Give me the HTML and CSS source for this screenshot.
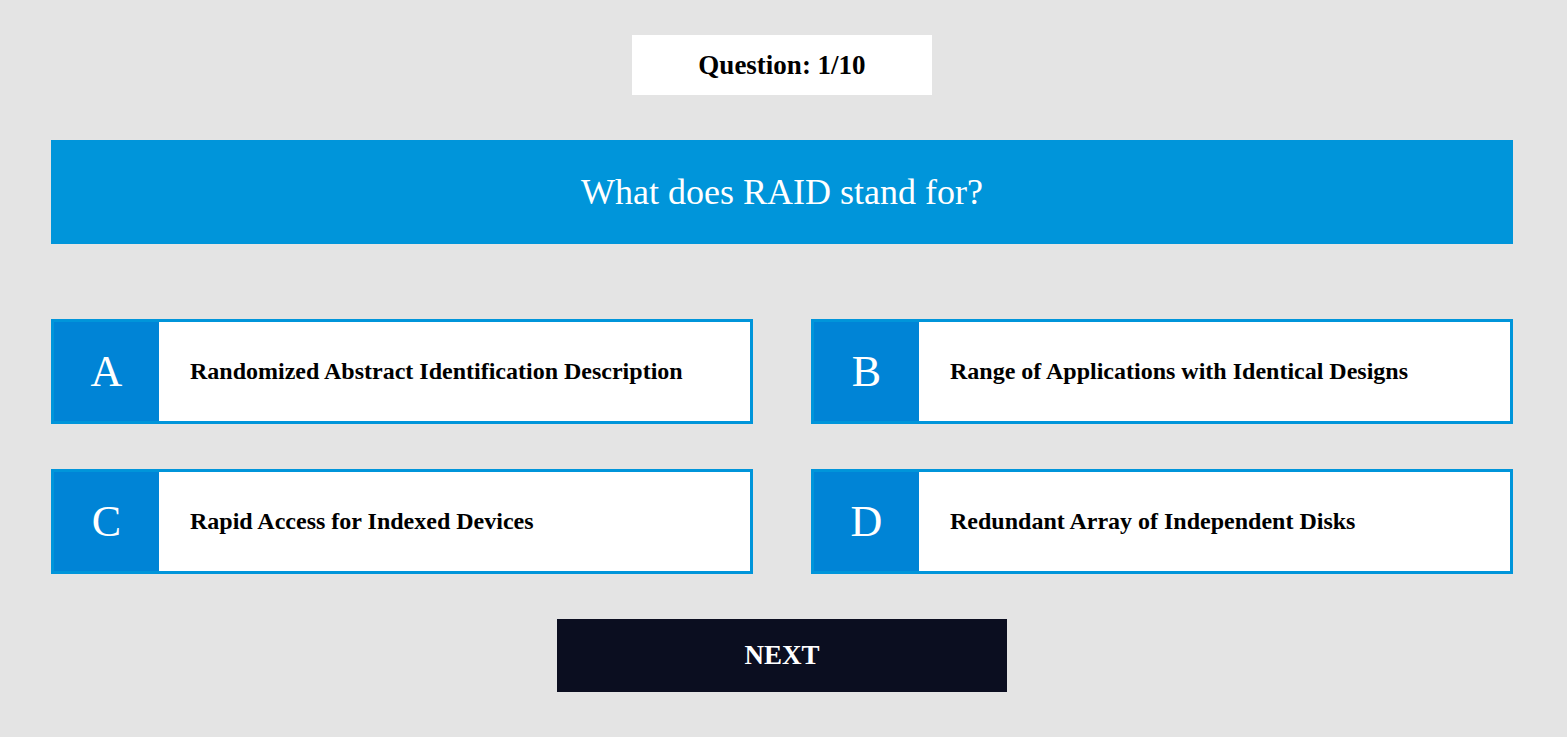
FILE: index.html
```html
<!DOCTYPE html>
<html>
<head>
<meta charset="utf-8">
<link rel="stylesheet" href="styles.css">
</head>
<body>
<main class="quiz">
  <div class="counter">Question: 1/10</div>
  <div class="question">What does RAID stand for?</div>
  <div class="options">
    <div class="option"><span class="letter">A</span><span class="answer">Randomized Abstract Identification Description</span></div>
    <div class="option"><span class="letter">B</span><span class="answer">Range of Applications with Identical Designs</span></div>
    <div class="option"><span class="letter">C</span><span class="answer">Rapid Access for Indexed Devices</span></div>
    <div class="option"><span class="letter">D</span><span class="answer">Redundant Array of Independent Disks</span></div>
  </div>
  <button class="next">NEXT</button>
</main>
</body>
</html>
```

FILE: styles.css
```css
html, body {
  margin: 0;
  padding: 0;
  background: #e4e4e4;
  font-family: "Liberation Serif", "Times New Roman", serif;
}
.quiz {
  width: 1462px;
  margin-left: 51px;
  padding-top: 35px;
  display: flex;
  flex-direction: column;
  align-items: center;
}
.counter {
  width: 300px;
  height: 60px;
  background: #ffffff;
  display: flex;
  align-items: center;
  justify-content: center;
  font-weight: bold;
  font-size: 27px;
  color: #000;
}
.question {
  margin-top: 45px;
  width: 100%;
  height: 104px;
  background: #0095da;
  color: #ffffff;
  font-size: 36px;
  display: flex;
  align-items: center;
  justify-content: center;
}
.options {
  margin-top: 75px;
  width: 100%;
  display: grid;
  grid-template-columns: 702px 702px;
  column-gap: 58px;
  row-gap: 45px;
}
.option {
  box-sizing: border-box;
  height: 105px;
  border: 3px solid #0095da;
  background: #ffffff;
  display: flex;
  align-items: center;
}
.letter {
  width: 105px;
  height: 100%;
  background: #0084d6;
  color: #ffffff;
  font-size: 44px;
  display: flex;
  align-items: center;
  justify-content: center;
}
.answer {
  padding-left: 31px;
  font-weight: bold;
  font-size: 24px;
  color: #000;
}
.next {
  margin-top: 45px;
  width: 450px;
  height: 73px;
  border: none;
  background: #0b0e20;
  color: #ffffff;
  font-family: "Liberation Serif", "Times New Roman", serif;
  font-weight: bold;
  font-size: 27px;
  cursor: pointer;
}
```
